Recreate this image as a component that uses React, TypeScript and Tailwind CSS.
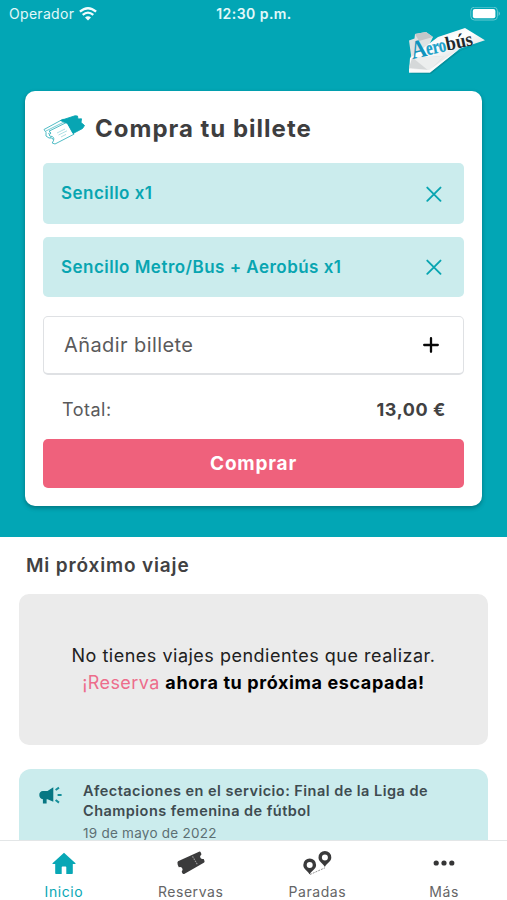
import React from "react";

function WifiIcon() {
  return (
    <svg width="18" height="14" viewBox="0 0 18 14" fill="none" stroke="#f2fcfd">
      <path d="M0.9 4.7Q9 -2.3 17.1 4.7" strokeWidth="2.3" />
      <path d="M3.7 7.9Q9 3.2 14.3 7.9" strokeWidth="2.2" />
      <path d="M9 13.6L6 10.5Q9 8 12 10.5Z" fill="#f2fcfd" stroke="none" />
    </svg>
  );
}

function BatteryIcon() {
  return (
    <svg width="31" height="14" viewBox="0 0 31 14" fill="none">
      <rect x="0.8" y="0.2" width="26.6" height="12.8" rx="3.6" stroke="#62c9d1" strokeWidth="1" />
      <rect x="2.8" y="2" width="22.6" height="9.2" rx="2" fill="#fff" />
      <path d="M28.7 4.2Q31 6.6 28.7 9Z" fill="#7fd3da" />
    </svg>
  );
}

function AerobusLogo() {
  return (
    <svg width="84" height="54" viewBox="0 0 84 54" className="block">
      <defs>
        <linearGradient id="paper" x1="0" y1="0" x2="0.7" y2="1">
          <stop offset="0" stopColor="#e3e5e6" />
          <stop offset="0.45" stopColor="#ffffff" />
          <stop offset="1" stopColor="#c9cdcf" />
        </linearGradient>
      </defs>
      <path d="M6 46.5L27 47L42 35L57 23.5L81 14.5L62 21L31 34Z" fill="#087f8a" opacity="0.55" />
      <path d="M5 13.5L10.5 11.5L11 7L22 5L29 10L24 20L8 42L5 45L7 28Z" fill="#dfe2e3" />
      <path d="M11 7L22 5L29 10L15 14Z" fill="#c3c7c9" />
      <path d="M6 31L34 10L61 1L81 13.3L56 21.5L26 45.5L5 45.5Z" fill="url(#paper)" />
      <path d="M8 31L40 29L26 43L5 41Z" fill="#d5d8d9" />
      <path d="M9 31L40 29L25 44Z" fill="#eceeee" />
      <path d="M5 41.8L25 43L42 31L56 21.5L26 45.6L5 45.6Z" fill="#fafafa" />
      <g transform="translate(8.8 32) rotate(-12)" fontFamily="'Liberation Serif', serif" fontWeight="700">
        <text x="0" y="0" fontSize="26" fill="#1093bd" textLength="15.5" lengthAdjust="spacingAndGlyphs">A</text>
        <text x="14.8" y="-0.7" fontSize="20" fill="#1aa0c8" stroke="#1aa0c8" strokeWidth="0.3" textLength="20.5" lengthAdjust="spacingAndGlyphs">ero</text>
        <text x="35.3" y="-1" fontSize="20" fill="#20292d" textLength="27" lengthAdjust="spacingAndGlyphs">bús</text>
      </g>
    </svg>
  );
}

function TicketsIcon() {
  return (
    <svg width="42" height="30" viewBox="0 0 42 30" fill="none" stroke="#3cb4be" strokeWidth="0.9" strokeLinejoin="round">
      <path d="M1 14.5L20 4.2L26 6L29 18L12 27L9 23Q6 24 3 21Q4 17 1 14.5Z" fill="#fff" />
      <path d="M3 16L23 6M5 19L8 17M7 23L10 18" strokeWidth="0.7" />
      <path d="M6 16.2L24 7.2L31 19.2L12 29L9.2 28Q12.5 23 9.2 21.5Q7 21.5 6 20Q9.5 18 6 16.2Z" fill="#fff" />
      <path d="M17.5 5.5L32 0.8L34.5 1L35 4L38.5 3.8L38 7.5L41.5 10.5L39.5 13.5L30 18.5L24.5 8.5Z" fill="#08a5b3" stroke="#08a5b3" />
      <path d="M14 18L22 14M15.5 20L24 15.8M18 22L23 19.4" strokeWidth="0.6" opacity="0.7" />
    </svg>
  );
}

function CloseIcon() {
  return (
    <svg width="16" height="16" viewBox="0 0 16 16" fill="none" stroke="#08a5b1" strokeWidth="1.9" strokeLinecap="round">
      <path d="M1.3 1.6L14.5 14.8M14.5 1.6L1.3 14.8" />
    </svg>
  );
}

function PlusIcon() {
  return (
    <svg width="16" height="16" viewBox="0 0 16 16" fill="none" stroke="#080808" strokeWidth="2.3" strokeLinecap="round">
      <path d="M8 1.2V14.8M1.2 8H14.8" />
    </svg>
  );
}

function MegaphoneIcon() {
  return (
    <svg width="24" height="20" viewBox="0 0 24 20" fill="#077783">
      <path d="M4 5H8.5L14.3 1.3V15.8L8.5 13.2H7.6V17.5H3.9V13.2Q0.3 12.6 0.3 9Q0.3 5.3 4 5Z" />
      <path d="M16.6 4L20 1.6M18.6 9H22.6M16.6 14L20 16.6" stroke="#16909b" strokeWidth="2" fill="none" />
    </svg>
  );
}

function HomeIcon() {
  return (
    <svg width="24" height="23" viewBox="0 0 24 23" fill="#08a7b5">
      <path d="M12 0.8L23.5 11.2Q24 12 23 12H20.8V21.2Q20.8 22 20 22H14.3V15.3Q14.3 14.6 13.6 14.6H10.4Q9.7 14.6 9.7 15.3V22H4Q3.2 22 3.2 21.2V12H1Q0 12 0.5 11.2Z" />
    </svg>
  );
}

function TicketIcon() {
  return (
    <svg width="28" height="24" viewBox="0 0 28 24" fill="#3b3b3c">
      <path d="M1 10.2L22 0.7Q23.3 0.3 23.8 1.5L24.5 3.3Q22.2 5.2 23.5 7.1Q24.8 8.6 26.7 7.9L27.5 10Q27.9 11.2 26.8 11.8L7.2 22.9Q6 23.5 5.4 22.3L4.7 20.7Q6.3 18.7 5.1 17Q4 15.6 1.8 16.2L0.7 13.7Q0 11 1 10.2Z" />
      <path d="M15.5 5.4L20.7 14" stroke="#9a9a9a" strokeWidth="1.1" strokeDasharray="1.6 0.9" />
    </svg>
  );
}

function PinsIcon() {
  return (
    <svg width="30" height="26" viewBox="0 0 30 26">
      <path d="M8 24.5L23 17.8" stroke="#777" strokeWidth="0.8" strokeDasharray="2 1" />
      <path fillRule="evenodd" fill="#3a3a3b" d="M7.7 8.5A6.4 6.4 0 0 1 14.1 14.9C14.1 19 9.7 20.5 7.9 24Q7.6 24.3 7.3 24C5.5 20.5 1.3 19 1.3 14.9A6.4 6.4 0 0 1 7.7 8.5ZM7.7 12A3 3 0 1 0 7.7 18A3 3 0 0 0 7.7 12Z" />
      <path fillRule="evenodd" fill="#3a3a3b" d="M22.9 1A6.4 6.4 0 0 1 29.3 7.4C29.3 11.5 24.9 13 23.1 16.5Q22.8 16.8 22.5 16.5C20.7 13 16.5 11.5 16.5 7.4A6.4 6.4 0 0 1 22.9 1ZM22.9 4.5A3 3 0 1 0 22.9 10.5A3 3 0 0 0 22.9 4.5Z" />
    </svg>
  );
}

function MoreIcon() {
  return (
    <svg width="22" height="6" viewBox="0 0 22 6" fill="#353536">
      <circle cx="3.2" cy="3" r="2.6" />
      <circle cx="11" cy="3" r="2.6" />
      <circle cx="18.8" cy="3" r="2.6" />
    </svg>
  );
}

function TicketRow({ children }: { children: React.ReactNode }) {
  return (
    <div className="flex items-center justify-between rounded-[5px] bg-[#cbeced] pt-px pr-[22px] pl-[18px] text-[17px] font-semibold tracking-[0.48px] whitespace-nowrap text-[#08a5b1]">
      {children}
      <CloseIcon />
    </div>
  );
}

function Tab({ icon, children, active = false }: { icon: React.ReactNode; children: React.ReactNode; active?: boolean }) {
  return (
    <div className={active ? "flex flex-col items-center pl-px text-[#08a7b5]" : "flex flex-col items-center pl-px text-[#656566]"}>
      <div className="mt-[9px] flex h-[26px] items-center">{icon}</div>
      <div className="mt-[6px] text-[14px] leading-[20px] tracking-[0.55px]">{children}</div>
    </div>
  );
}

export default function App() {
  return (
    <div className="flex h-[900px] w-[507px] flex-col overflow-hidden bg-white font-['Inter',sans-serif]">
      <header className="h-[537px] shrink-0 bg-[#02a6b5]">
        <div className="grid h-[27px] grid-cols-3 items-center pr-[6px] pl-[9px] text-[14px] text-[#e3f8f9]">
          <div className="flex items-center gap-[5px]">
            <span className="tracking-[0.3px]">Operador</span>
            <WifiIcon />
          </div>
          <div className="pr-[2px] text-center font-semibold tracking-[0.45px]">12:30 p.m.</div>
          <div className="flex justify-end"><BatteryIcon /></div>
        </div>
        <div className="flex h-[64px] justify-end pr-[19px]"><AerobusLogo /></div>
        <section className="mx-[25px] flex h-[415px] w-[457px] flex-col rounded-[10px] bg-white px-[18px] shadow-[0_2px_4px_rgba(0,60,65,0.45)]">
          <div className="flex h-[72px] items-center gap-[10px] pt-[5px]">
            <TicketsIcon />
            <h1 className="pb-px text-[24px] font-bold tracking-[1px] whitespace-nowrap text-[#3e3e3f]">Compra tu billete</h1>
          </div>
          <div className="grid h-[134px] grid-rows-2 gap-[13px]">
            <TicketRow><span>Sencillo x1</span></TicketRow>
            <TicketRow><span>Sencillo Metro/Bus + Aerobús x1</span></TicketRow>
          </div>
          <div className="mt-[19px] flex h-[59px] items-center justify-between rounded-[5px] border border-b-2 border-[#dfe1e4] pr-[24px] pl-[20px] text-[20px] text-[#5a5a5b]">
            <span className="tracking-[0.42px]">Añadir billete</span>
            <PlusIcon />
          </div>
          <div className="flex h-[64px] items-center justify-between pt-[4px] pr-[18px] pl-[19px] text-[18px] text-[#5a5a5b]">
            <span className="tracking-[0.5px]">Total:</span>
            <span className="font-bold tracking-[0.6px] text-[#414142]">13,00 €</span>
          </div>
          <button className="h-[49px] rounded-[5px] bg-[#ef617c] pt-px text-[19px] font-bold tracking-[0.8px] text-white">Comprar</button>
        </section>
      </header>
      <main className="h-[303px] shrink-0 overflow-hidden px-[19px]">
        <h2 className="flex h-[57px] items-center pt-px pl-[7px] text-[19px] font-semibold tracking-[0.85px] text-[#414142]">
          Mi próximo viaje
        </h2>
        <section className="flex h-[151px] flex-col items-center justify-center rounded-[10px] bg-[#ebebeb] pb-[2px] text-[18px] leading-[27px] text-[#202020]">
          <p className="tracking-[0.5px]">No tienes viajes pendientes que realizar.</p>
          <p className="tracking-[0.6px]">
            <span className="tracking-[0.4px] text-[#ed6d8b]">¡Reserva</span>{" "}
            <span className="font-bold text-black">ahora tu próxima escapada!</span>
          </p>
        </section>
        <section className="mt-[24px] flex h-[90px] rounded-[12px] bg-[#cbeced] pt-[12px] pl-[20px]">
          <div className="w-[44px] pt-[5px]"><MegaphoneIcon /></div>
          <div className="text-[14.5px] leading-[20px] font-semibold tracking-[0.47px] whitespace-nowrap text-[#3e4b50]">
            <p>Afectaciones en el servicio: Final de la Liga de</p>
            <p>Champions femenina de fútbol</p>
            <p className="mt-[2px] text-[13.5px] font-normal tracking-[0.25px] text-[#5c6f73]">19 de mayo de 2022</p>
          </div>
        </section>
      </main>
      <nav className="grid h-[60px] shrink-0 grid-cols-4 border-t border-[#e3e6e7] bg-white">
        <Tab active icon={<HomeIcon />}>Inicio</Tab>
        <Tab icon={<TicketIcon />}>Reservas</Tab>
        <Tab icon={<PinsIcon />}>Paradas</Tab>
        <Tab icon={<MoreIcon />}>Más</Tab>
      </nav>
    </div>
  );
}
